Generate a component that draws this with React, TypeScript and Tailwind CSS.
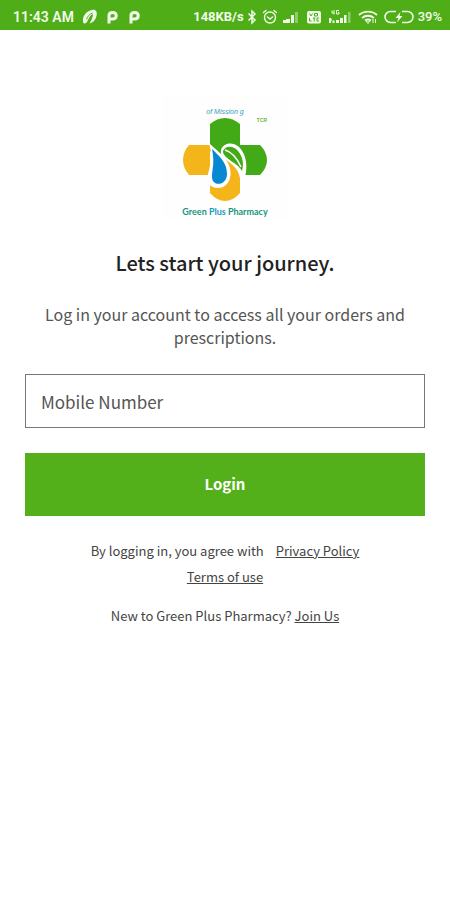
import { useState } from 'react';

function StatusBar() {
  return (
    <header className="flex h-[30px] items-center justify-between bg-[#4fae17] pl-[13px] pr-2 pt-1 font-['Roboto',sans-serif] text-[13px] font-semibold leading-5 text-[#f1fbe9]">
      <div className="flex items-center">
        <span className="text-sm leading-5">11:43 AM</span>
        <svg className="ml-2 h-4 w-4" viewBox="0 0 16 16" fill="currentColor" aria-hidden="true">
          <path d="M1 11C1 6 5 2 10 1c4-.8 5.500 2 4.500 6-1 4-3.500 6.500-7 7.500 2-3.500 3.500-6.500 3.500-9.500-2 .5-3.500 3-5 6-1 2.500-2 3.500-3.500 3.500S1 13 1 11z" />
          <path d="M4.500 10.500C5.500 7.500 7.500 5 10.500 4" fill="none" stroke="#4fae17" strokeWidth="1" />
        </svg>
        <ParkingIcon />
        <ParkingIcon />
      </div>

      <div className="flex items-center">
        <span className="font-bold">148KB/s</span>
        <svg className="ml-0.5 h-4 w-3" viewBox="0 0 12 16" fill="none" stroke="currentColor" strokeWidth="1.500" aria-hidden="true">
          <path d="M2.500 4.500 9 11l-3 3V2l3 3-6.500 6.500" />
        </svg>
        <svg className="ml-1 h-4 w-4" viewBox="0 0 16 16" fill="none" stroke="currentColor" strokeWidth="1.400" strokeLinecap="round" aria-hidden="true">
          <circle cx="8" cy="8.500" r="5.500" />
          <path d="M1.500 3.500 4 1.500M14.500 3.500 12 1.500M5.500 8 8 10l2.500-2" />
        </svg>
        <svg className="ml-1 h-4 w-[18px]" viewBox="0 0 18 16" fill="currentColor" aria-hidden="true">
          <path d="M1 11h3v3H1zM4 10h4v4H4zM9 6h3v8H9z" />
          <path d="M13 3h3v11h-3z" opacity=".4" />
        </svg>
        <svg className="ml-1.5 h-4 w-4" viewBox="0 0 16 16" aria-hidden="true">
          <rect x="1" y="2" width="14" height="12.500" rx="2" fill="currentColor" />
          <path d="M3.500 4.500 5 7l1.500-2.500M8.500 4.500h3v2.500h-3zM3.500 9v3h2M7 9h2.500M8.200 9v3.500M13 9h-2v3h2" fill="none" stroke="#4fae17" strokeWidth="1" />
        </svg>
        <svg className="ml-1.5 h-4 w-6" viewBox="0 0 24 16" fill="currentColor" aria-hidden="true">
          <path d="M4 1.500v2.500h2M6 1v4.500M11 1.500H8.500v3.500H11V3.500H10" fill="none" stroke="currentColor" strokeWidth="1" />
          <path d="M1 9h2l1 2-1 1.500v1.500H1zM4.500 11.500h2V14h-2zM8 11h3v3H8zM12 9h3v5h-3zM16 6h2.500v8H16z" />
          <path d="M20 3h2.500v11H20z" opacity=".4" />
        </svg>
        <svg className="ml-1.5 h-4 w-5" viewBox="0 0 20 16" fill="none" stroke="currentColor" strokeWidth="1.800" aria-hidden="true">
          <path d="M1 6c5-4.500 13-4.500 18 0M4 9c3.500-3 8.500-3 12 0M7 11.500c2-1.500 4-1.500 6 0" />
          <path d="m8 12 2 2.500 2-2.500zM15 10v4M17.500 10v4" strokeWidth="1" />
        </svg>
        <svg className="ml-1.5 h-4 w-[30px]" viewBox="0 0 30 16" fill="none" stroke="currentColor" strokeWidth="1.500" aria-hidden="true">
          <path d="M12 2.500H6.500a5.500 5.500 0 0 0 0 11H12M18 2.500h5.500a5.500 5.500 0 0 1 0 11H18" />
          <path d="m16.500 3-5 6h3l-1.500 4.500 5.500-6.500h-3z" fill="currentColor" stroke="none" />
        </svg>
        <span className="ml-1 font-medium">39%</span>
      </div>
    </header>
  );
}

function ParkingIcon() {
  return (
    <svg className="ml-1.5 h-4 w-4" viewBox="0 0 16 16" fill="none" stroke="currentColor" strokeWidth="3" aria-hidden="true">
      <path d="M5 14.500V6.500C5 4.500 6.500 3.500 8.500 3.500c5 0 5 6.500 0 6.500H5" />
    </svg>
  );
}

function Logo() {
  return (
    <svg className="h-[135px] w-[130px]" viewBox="0 0 130 135" role="img" aria-label="Green Plus Pharmacy">
      <rect x="3" y="5" width="124" height="125" fill="#fefefe" />
      <text x="65" y="24" textAnchor="middle" fontSize="7" fontStyle="italic" fontFamily="Liberation Sans, sans-serif" fill="#36a0bd">
        of Mission g
      </text>
      <text x="102" y="32" textAnchor="middle" fontSize="5" fontWeight="700" fontFamily="Liberation Sans, sans-serif" fill="#70b84c">
        TCR
      </text>
      {/* cross */}
      <path d="M50 34Q57 28 65 28t15 6v21h20q7 7 7 15t-7 15H80L50 61z" fill="#42aa16" />
      <path d="M50 55H29q-6 7-6 15t6 15h21z" fill="#f4b51b" />
      {/* leaf */}
      <path d="M61 60c2-7 11-9 18-3 7 7 9 18 6 30L60 80z" fill="#fff" />
      <path d="M63 61c2-5 10-6 15 0 5 6 6 13 4 20-2-4-6-7-11-10-5-4-8-6-8-10z" fill="#42aa16" />
      <path d="M65 60c7 2 12 8 16 17" fill="none" stroke="#fff" strokeWidth="1.500" />
      <path d="M50 80v23q7 8 15 8t15-8V88C78 78 71 73 63 68z" fill="#f4b51b" />
      {/* drop */}
      <path d="M49 53c7 7 15 12 19 20 6 12 1 25-10 25-9 0-12-7-10-14 3-10 4-20 1-31z" fill="#fff" />
      <path d="M52 59c7 7 15 13 15 25 0 12-15 13-15 3 0-8 3-14 0-28z" fill="#0788d2" />
      <text x="65" y="125" textAnchor="middle" fontSize="9" fontWeight="700" fontFamily="Lato, sans-serif" fill="#17947d">
        Green <tspan fill="#159bc0">Plus</tspan> Pharmacy
      </text>
    </svg>
  );
}

export default function App() {
  const [mobile, setMobile] = useState('');

  return (
    <div className="min-h-screen bg-white font-['Noto_Sans_CJK_SC',sans-serif] text-[#444]">
      <StatusBar />

      <main className="flex flex-col px-[25px] pt-[60px] text-center">
        <div className="flex justify-center">
          <Logo />
        </div>

        <h1 className="mt-[22px] text-xl font-medium leading-8 text-[#222]">Lets start your journey.</h1>
        <p className="mt-6 px-4 text-base leading-[23px] text-[#555]">
          Log in your account to access all your orders and prescriptions.
        </p>

        <form onSubmit={(e) => e.preventDefault()} className="mt-[25px] flex flex-col">
          <input
            type="tel"
            aria-label="Mobile Number"
            placeholder="Mobile Number"
            value={mobile}
            onChange={(e) => setMobile(e.target.value)}
            className="h-[54px] w-full border border-[#777] px-[15px] text-[17px] text-[#444] outline-none placeholder:text-[#555]"
          />
          <button type="submit" className="mt-[25px] h-[63px] w-full bg-[#53b01a] text-[15px] font-bold text-white">
            Login
          </button>
        </form>

        <p className="mt-[22px] px-14 text-[13px] leading-[26px]">
          By logging in, you agree with
          <a href="#privacy" className="ml-3 underline">Privacy Policy</a>{' '}
          <a href="#terms" className="underline">Terms of use</a>
        </p>
        <p className="mt-[13px] text-[13px] leading-[26px]">
          New to Green Plus Pharmacy? <a href="#join" className="underline">Join Us</a>
        </p>
      </main>
    </div>
  );
}
